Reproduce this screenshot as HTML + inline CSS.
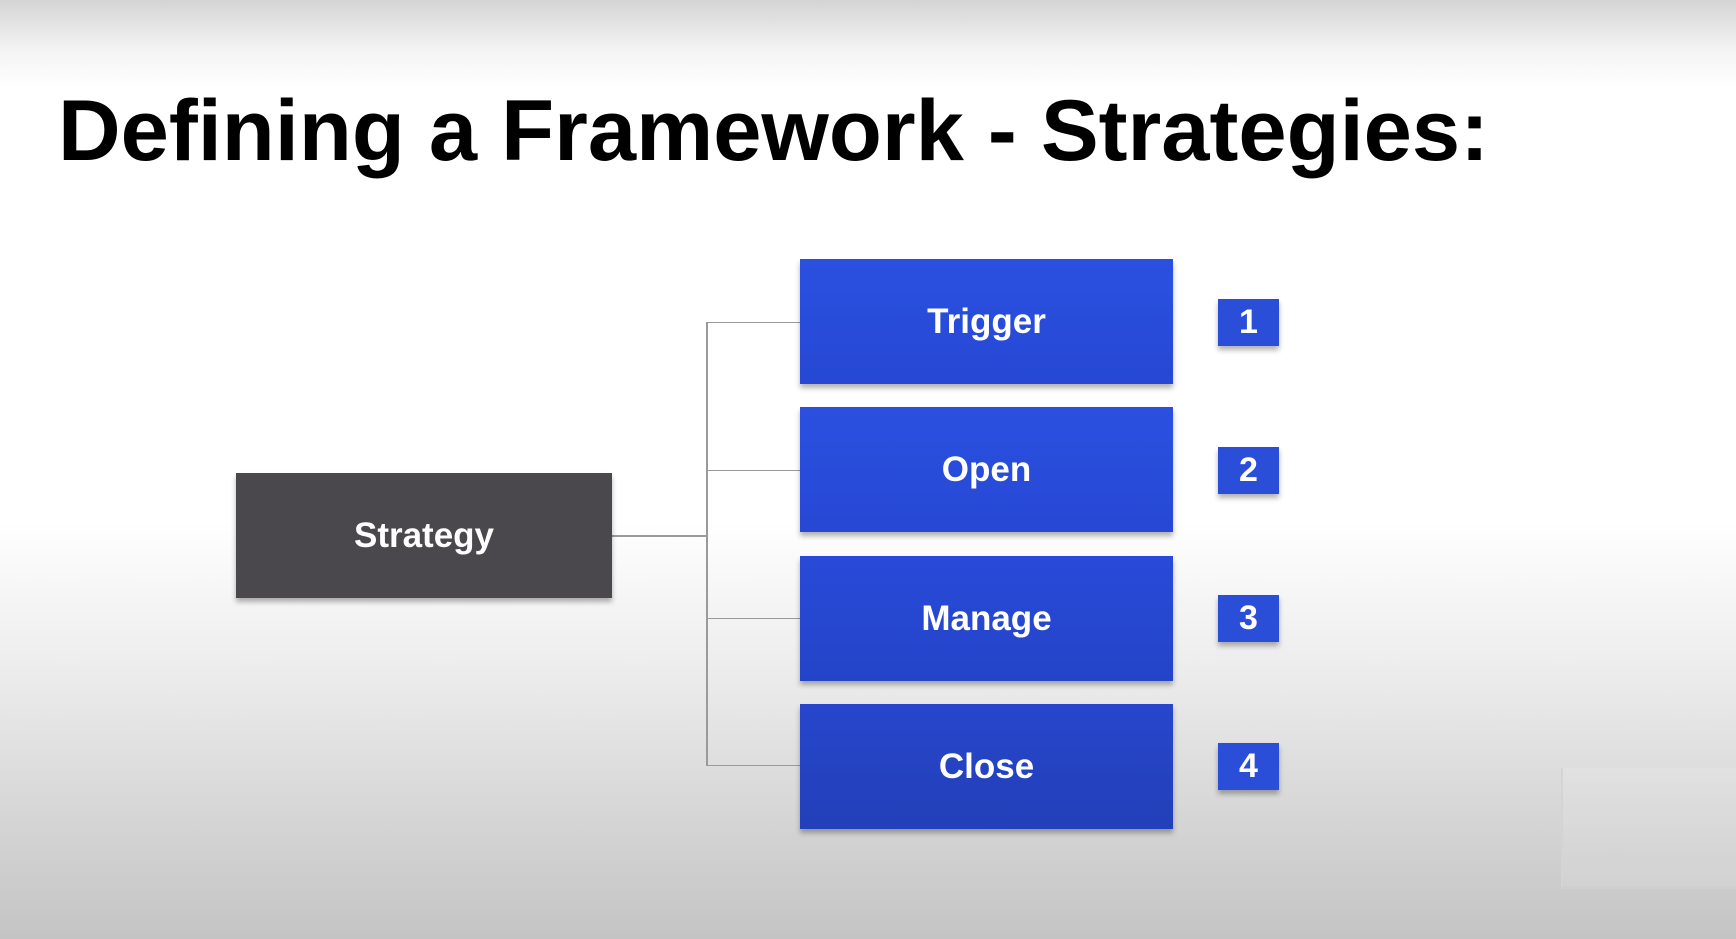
<!DOCTYPE html>
<html><head><style>
html,body{margin:0;padding:0}
body{width:1736px;height:939px;position:relative;overflow:hidden;font-family:"Liberation Sans",sans-serif;
background:linear-gradient(to bottom,#d4d4d4 0px,#f4f4f4 50px,#fff 90px,#fff 520px,#ebebeb 680px,#d2d2d2 840px,#c4c4c4 939px);}
.b{position:absolute;color:#fff;font-weight:bold;display:flex;align-items:center;justify-content:center;box-shadow:0 4px 5px rgba(0,0,0,.3)}
.blue{background:linear-gradient(to bottom,#2b50e0,#2648d4);font-size:35px;width:373px;height:125px;left:800px}
.num{background:#2a4ed8;font-size:34px;width:61px;height:47px;left:1218px}
.l{position:absolute;background:#9a9a9a}
</style></head><body>
<svg style="position:absolute;left:0;top:0" width="1736" height="200"><text x="58" y="160" font-family="Liberation Sans" font-weight="bold" font-size="86" textLength="1431" lengthAdjust="spacingAndGlyphs" fill="#000">Defining a Framework - Strategies:</text></svg>
<div class="l" style="left:612px;top:535px;width:94px;height:2px"></div>
<div class="l" style="left:706px;top:322px;width:2px;height:444px"></div>
<div class="l" style="left:706px;top:322px;width:94px;height:1px"></div>
<div class="l" style="left:706px;top:470px;width:94px;height:1px"></div>
<div class="l" style="left:706px;top:618px;width:94px;height:1px"></div>
<div class="l" style="left:706px;top:765px;width:94px;height:1px"></div>
<div class="b" style="left:236px;top:473px;width:376px;height:125px;background:#4a484c;font-size:35px">Strategy</div>
<div class="b blue" style="top:259px">Trigger</div>
<div class="b blue" style="top:407px">Open</div>
<div class="b blue" style="top:556px;background:linear-gradient(to bottom,#284ad8,#2444c8)">Manage</div>
<div class="b blue" style="top:704px;background:linear-gradient(to bottom,#2746cc,#2240b8)">Close</div>
<div class="b num" style="top:299px">1</div>
<div class="b num" style="top:447px">2</div>
<div class="b num" style="top:595px">3</div>
<div class="b num" style="top:743px">4</div>
<div style="position:absolute;left:1561px;top:768px;width:180px;height:118px;border-left:2px solid #d4d4d4;border-bottom:3px solid #cfcfcf;background:rgba(255,255,255,.12)"></div>
</body></html>
